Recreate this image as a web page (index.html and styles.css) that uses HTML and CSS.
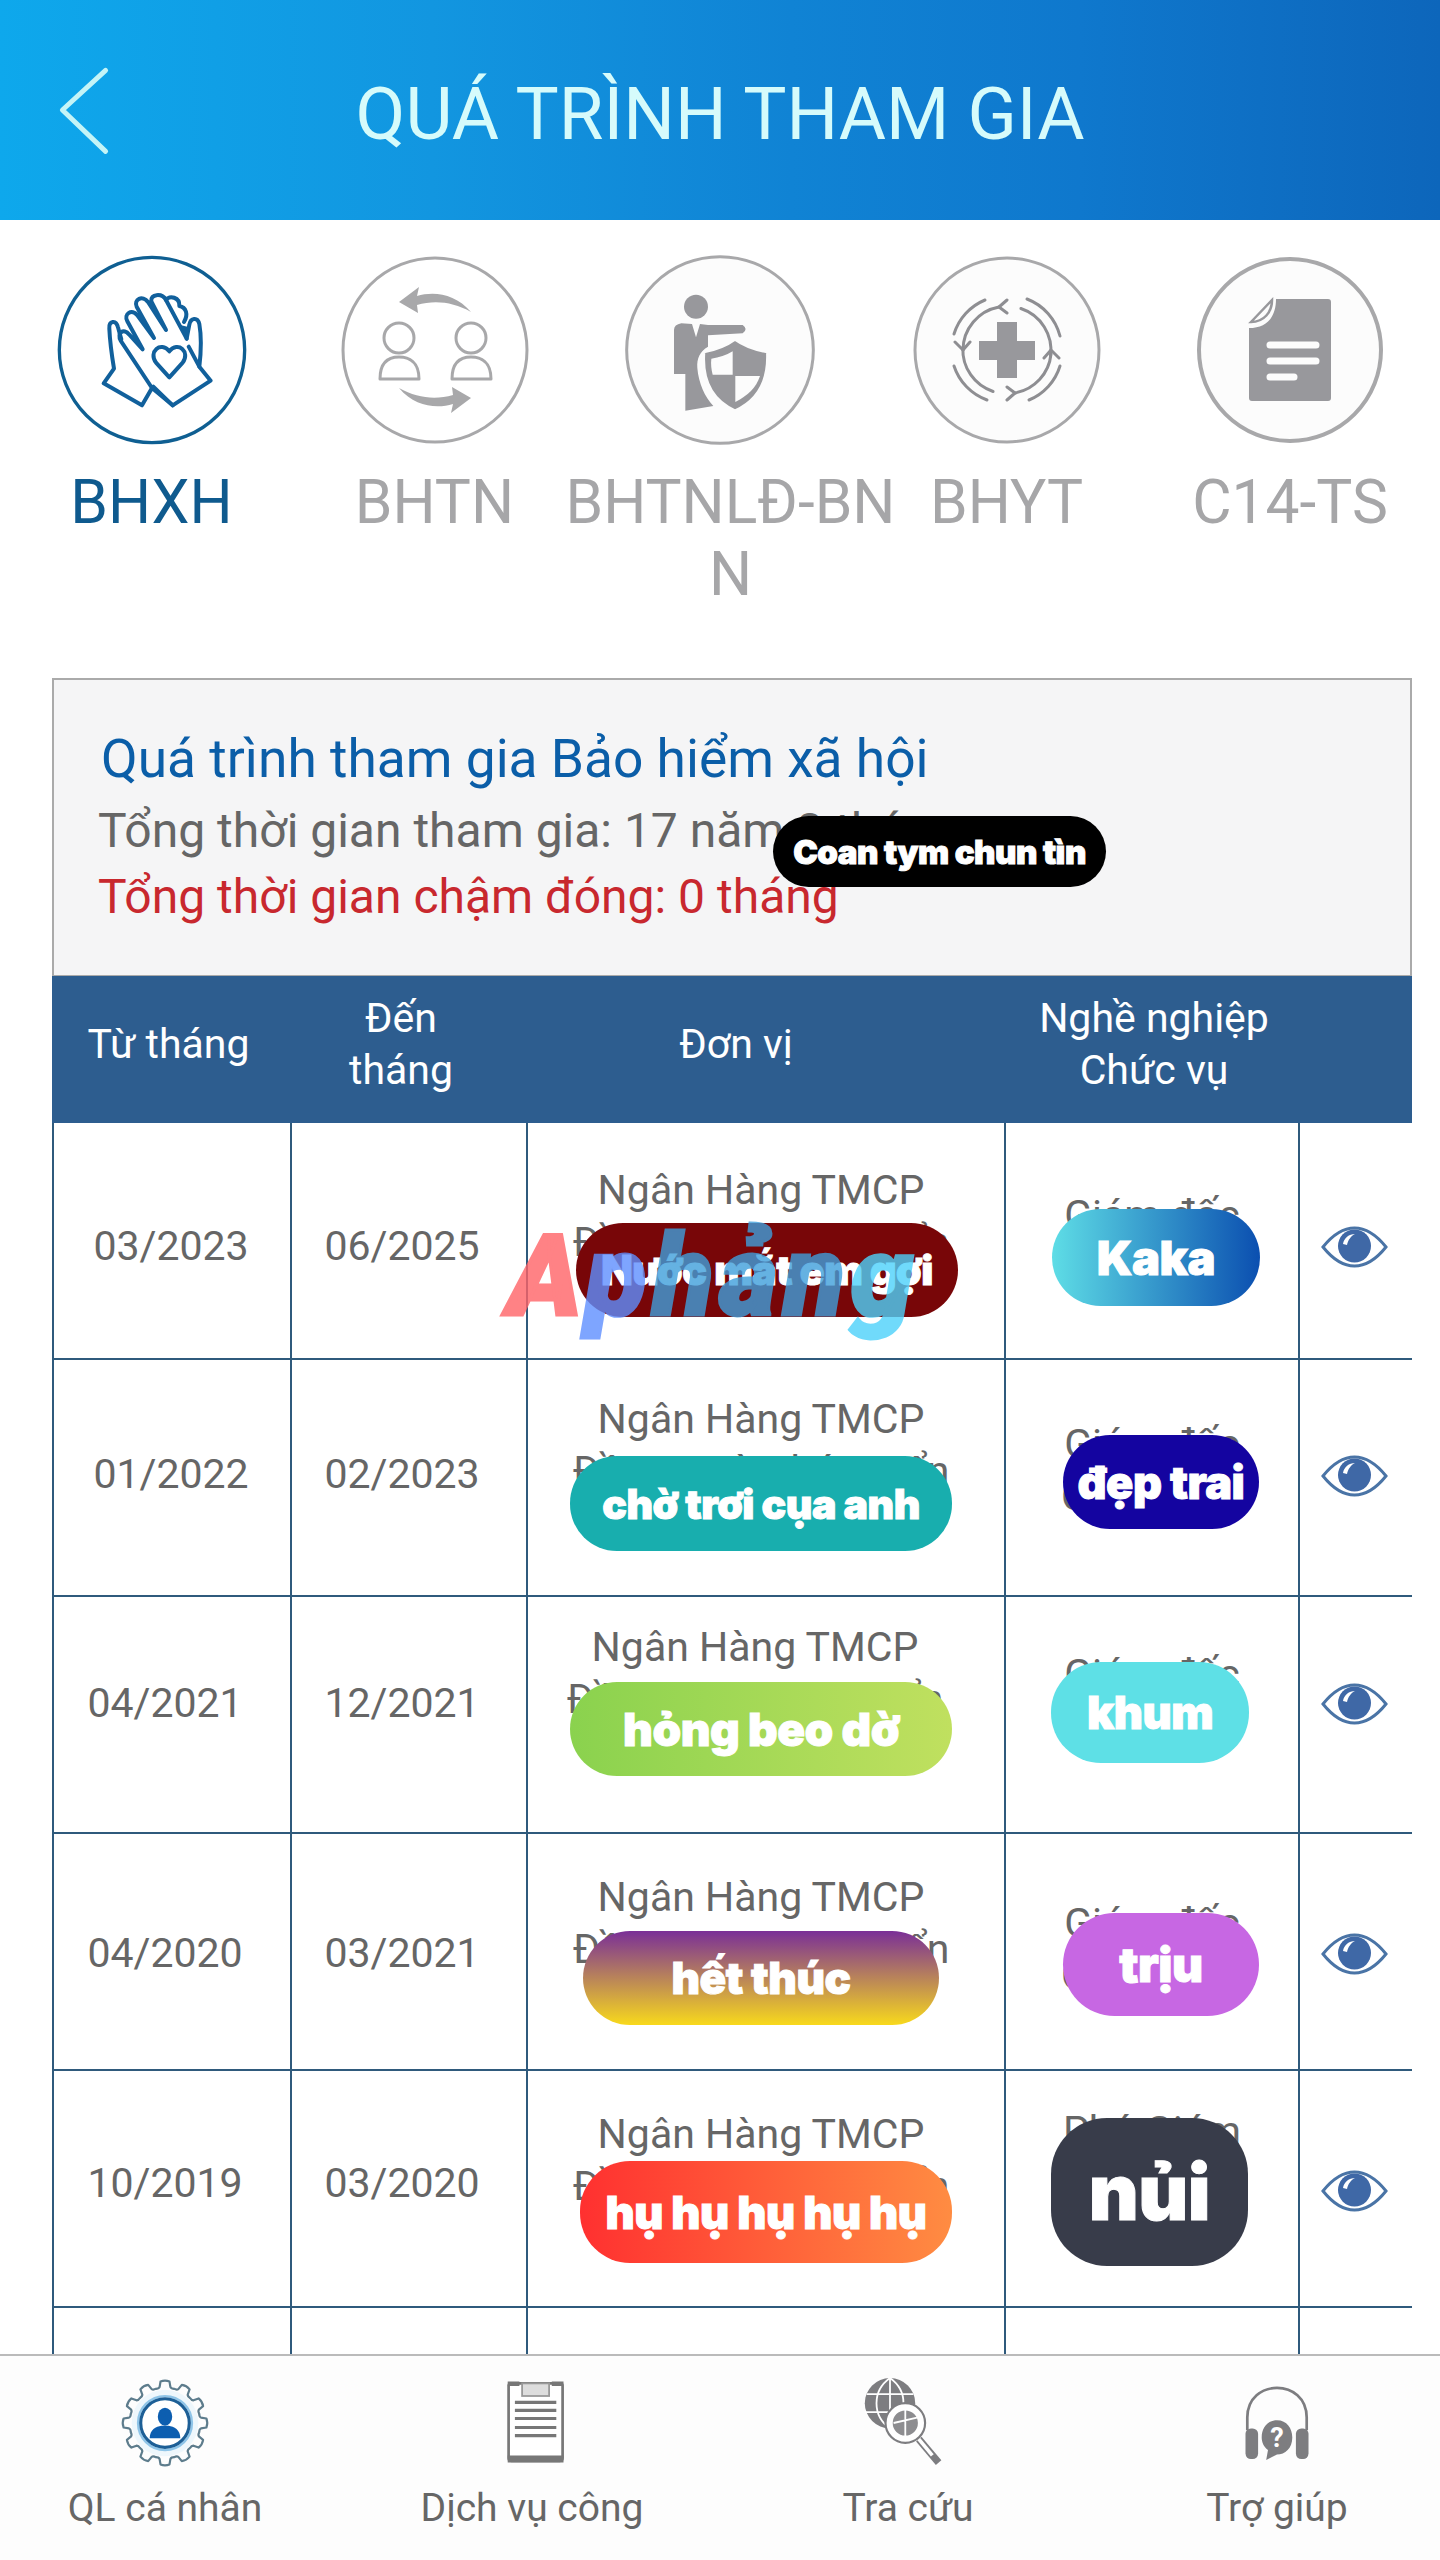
FILE: index.html
```html
<!DOCTYPE html>
<html lang="vi">

<head>
    <meta charset="UTF-8">
    <meta name="viewport" content="width=device-width, initial-scale=1.0">
    <title>Quá trình tham gia</title>
    <link rel="stylesheet" href="styles.css">
</head>

<body>
    <div class="app">

        <header class="top-bar">
            <svg class="back-icon" viewBox="0 0 60 100">
                <path d="M54 6 L6 50 L54 96" />
            </svg>
            <h1 class="page-title">QUÁ TRÌNH THAM GIA</h1>
        </header>

        <nav class="tabs">
            <div class="tab active">
                <svg class="tab-icon" viewBox="0 0 600 600">
                    <circle cx="300" cy="300" r="278" fill="#fff" stroke="#0f5f92" stroke-width="10" />
                    <g fill="none" stroke="#11609c" stroke-width="12" stroke-linejoin="round" stroke-linecap="round">
                        <path d="M208 268 L198 232 C192 208 170 212 172 236 C174 280 180 320 186 356 L155 400 L270 466 L300 414 L362 466 L476 392 L442 350 C448 300 448 256 442 222 C436 200 416 204 412 224 L404 266" />
                        <path d="M300 414 L206 272 C194 250 214 232 232 254 L272 298 L226 214 C214 192 240 174 256 196 L306 264 L254 170 C244 148 272 134 288 156 L342 240 L298 154 C294 132 330 128 342 150 L404 266" />
                        <path d="M342 150 C352 134 384 142 382 168 C402 172 410 192 396 216" />
                        <path d="M352 382 L312 338 C288 306 326 272 352 304 C378 272 416 306 392 338 Z" />
                        <path d="M362 466 L304 410 M442 350 L410 290" />
                    </g>
                    <path d="M385 225 L412 232 L404 266 Z" fill="#11609c" />
                </svg>
                <span class="tab-label">BHXH</span>
            </div>
            <div class="tab">
                <svg class="tab-icon" viewBox="0 0 200 200">
                    <circle cx="100" cy="100" r="92" fill="#fff" stroke="#a8a8aa" stroke-width="3" />
                    <g fill="none" stroke="#a8a8aa" stroke-width="3" stroke-linejoin="round">
                        <circle cx="64" cy="88" r="15" />
                        <circle cx="136" cy="88" r="15" />
                        <path d="M45 129 C45 112 54 107 64 107 C74 107 84 112 84 129 Z" />
                        <path d="M117 129 C117 112 126 107 136 107 C146 107 156 112 156 129 Z" />
                    </g>
                    <path d="M136 62 C120 43 98 41 82 46 L84 37 L64 52 L83 63 L82 55 C100 50 118 52 136 62 Z" fill="#a8a8aa" />
                    <path d="M64 138 C80 157 102 159 118 154 L116 163 L136 148 L117 137 L118 145 C100 150 82 148 64 138 Z" fill="#a8a8aa" />
                </svg>
                <span class="tab-label">BHTN</span>
            </div>
            <div class="tab">
                <svg class="tab-icon" viewBox="0 0 600 600">
                    <circle cx="300" cy="300" r="280" fill="#fcfcfc" stroke="#a8a8aa" stroke-width="9" />
                    <circle cx="228" cy="170" r="36" fill="#98989c" />
                    <path d="M162 240 Q162 224 184 220 L216 222 L228 262 L240 222 L264 225 L368 225 Q386 238 368 250 L264 256 L264 290 C240 304 230 324 232 354 C236 400 254 440 280 468 L196 482 L196 372 L162 372 Z" fill="#98989c" />
                    <path d="M345 268 C375 290 410 300 442 306 C446 384 420 448 345 482 C270 448 246 384 252 306 C282 300 315 290 345 268 Z" fill="#98989c" stroke="#fcfcfc" stroke-width="8" />
                    <path d="M338 304 L338 374 L278 374 C274 358 272 342 274 326 C298 322 318 316 338 304 Z" fill="#fcfcfc" />
                    <path d="M346 378 L420 378 C408 414 384 436 346 456 Z" fill="#fcfcfc" />
                </svg>
                <span class="tab-label tab-label-wide">BHTNLĐ-BN<wbr>N</span>
            </div>
            <div class="tab">
                <svg class="tab-icon" viewBox="0 0 200 200">
                    <circle cx="100" cy="100" r="92" fill="#fcfcfc" stroke="#a8a8aa" stroke-width="3" />
                    <path d="M90 72 H110 V91 H128 V110 H110 V128 H90 V110 H72 V91 H90 Z" fill="#98989c" />
                    <g fill="none" stroke="#8e8e92" stroke-width="3" stroke-linecap="round" stroke-linejoin="round">
                        <path d="M56 100 A44 44 0 0 1 92 57" />
                        <path d="M108 57 A44 44 0 0 1 144 100" transform="rotate(8 100 100)" />
                        <path d="M144 104 A44 44 0 0 1 108 143" />
                        <path d="M92 143 A44 44 0 0 1 56 104" transform="rotate(8 100 100)" />
                        <path d="M47 84 A54 54 0 0 1 78 50" />
                        <path d="M120 49 A54 54 0 0 1 153 86" />
                        <path d="M153 116 A54 54 0 0 1 122 150" />
                        <path d="M80 150 A54 54 0 0 1 47 116" />
                        <path d="M100 50 L92 57 L100 63 M48 92 L56 100 L63 92 M100 150 L108 143 L100 137 M152 108 L144 100 L137 108" />
                    </g>
                </svg>
                <span class="tab-label">BHYT</span>
            </div>
            <div class="tab">
                <svg class="tab-icon" viewBox="0 0 200 200">
                    <circle cx="100" cy="100" r="91" fill="#fcfcfc" stroke="#a8a8aa" stroke-width="4" />
                    <path d="M86 49 H138 Q141 49 141 52 V148 Q141 151 138 151 H62 Q59 151 59 148 V78 C76 78 86 68 86 49 Z" fill="#98989c" />
                    <path d="M61 72 L82 50 C82 62 74 72 61 72 Z" fill="none" stroke="#98989c" stroke-width="2.5" />
                    <path d="M80 95 H126 M80 111 H126 M80 127 H104" fill="none" stroke="#fcfcfc" stroke-width="7" stroke-linecap="round" />
                </svg>
                <span class="tab-label">C14-TS</span>
            </div>
        </nav>

        <main class="content">
            <section class="summary">
                <h2 class="summary-title">Quá trình tham gia Bảo hiểm xã hội</h2>
                <p class="summary-line">Tổng thời gian tham gia: 17 năm 8 tháng</p>
                <p class="summary-line late">Tổng thời gian chậm đóng: 0 tháng</p>
                <span class="sticker sticker-black">Coan tym chun tìn</span>
            </section>

            <div class="table-head">
                <div>Từ tháng</div>
                <div>Đến<br>tháng</div>
                <div>Đơn vị</div>
                <div>Nghề nghiệp<br>Chức vụ</div>
            </div>

            <div class="table-body">
                <div class="row r1">
                    <div class="cell date">03/2023</div>
                    <div class="cell date">06/2025</div>
                    <div class="cell unit">Ngân Hàng TMCP<br>Đầu Tư và Phát Triển<br>Việt Nam</div>
                    <div class="cell job">Giám đốc<br>Chi nhánh</div>
                    <div class="cell view"><svg class="eye"><use href="#eye-icon" /></svg></div>
                    <span class="sticker s-tears">Nước mắt em gợi</span>
                    <span class="sticker s-kaka">Kaka</span>
                </div>
                <div class="row r2">
                    <div class="cell date">01/2022</div>
                    <div class="cell date">02/2023</div>
                    <div class="cell unit">Ngân Hàng TMCP<br>Đầu Tư và Phát Triển<br>Việt Nam</div>
                    <div class="cell job">Giám đốc<br>Chi nhánh</div>
                    <div class="cell view"><svg class="eye"><use href="#eye-icon" /></svg></div>
                    <span class="sticker s-wait">chờ trơi cụa anh</span>
                    <span class="sticker s-handsome">đẹp trai</span>
                </div>
                <div class="row r3">
                    <div class="cell date shifted">04/2021</div>
                    <div class="cell date">12/2021</div>
                    <div class="cell unit">Ngân Hàng TMCP<br>Đầu Tư và Phát Triển<br>Việt Nam</div>
                    <div class="cell job">Giám đốc<br>Chi nhánh</div>
                    <div class="cell view"><svg class="eye"><use href="#eye-icon" /></svg></div>
                    <span class="sticker s-beo">hỏng beo dờ</span>
                    <span class="sticker s-khum">khum</span>
                </div>
                <div class="row r4">
                    <div class="cell date shifted">04/2020</div>
                    <div class="cell date">03/2021</div>
                    <div class="cell unit">Ngân Hàng TMCP<br>Đầu Tư và Phát Triển<br>Việt Nam</div>
                    <div class="cell job">Giám đốc<br>Chi nhánh</div>
                    <div class="cell view"><svg class="eye"><use href="#eye-icon" /></svg></div>
                    <span class="sticker s-end">hết thúc</span>
                    <span class="sticker s-triu">trịu</span>
                </div>
                <div class="row r5">
                    <div class="cell date shifted">10/2019</div>
                    <div class="cell date">03/2020</div>
                    <div class="cell unit">Ngân Hàng TMCP<br>Đầu Tư và Phát Triển<br>Việt Nam</div>
                    <div class="cell job">Phó Giám<br>đốc</div>
                    <div class="cell view"><svg class="eye"><use href="#eye-icon" /></svg></div>
                    <span class="sticker s-cry">hụ hụ hụ hụ hụ</span>
                    <span class="sticker s-nui">nủi</span>
                </div>
                <div class="row">
                    <div class="cell"></div>
                    <div class="cell"></div>
                    <div class="cell"></div>
                    <div class="cell"></div>
                    <div class="cell"></div>
                </div>
            </div>
        </main>

        <footer class="bottom-nav">
            <div class="nav-item">
                <svg class="nav-icon" viewBox="0 0 100 100">
                    <circle cx="50" cy="50" r="37" fill="#eef7fc" />
                    <g transform="translate(50 50)" fill="none" stroke="#5d7c8c" stroke-width="2.4" stroke-linejoin="round">
                        <path id="gear-tooth" d="M-10.5-38 Q-7-38-6-40 L-5-46 Q0-48 5-46 L6-40 Q7-38 10.5-38" />
                        <use href="#gear-tooth" transform="rotate(30)" />
                        <use href="#gear-tooth" transform="rotate(60)" />
                        <use href="#gear-tooth" transform="rotate(90)" />
                        <use href="#gear-tooth" transform="rotate(120)" />
                        <use href="#gear-tooth" transform="rotate(150)" />
                        <use href="#gear-tooth" transform="rotate(180)" />
                        <use href="#gear-tooth" transform="rotate(210)" />
                        <use href="#gear-tooth" transform="rotate(240)" />
                        <use href="#gear-tooth" transform="rotate(270)" />
                        <use href="#gear-tooth" transform="rotate(300)" />
                        <use href="#gear-tooth" transform="rotate(330)" />
                    </g>
                    <circle cx="50" cy="50" r="30" fill="#fff" stroke="#8fc5e8" stroke-width="2.5" />
                    <circle cx="50" cy="50" r="27" fill="#fff" stroke="#1d5f96" stroke-width="3.5" />
                    <ellipse cx="50" cy="43" rx="8" ry="10" fill="#0d5eb0" />
                    <path d="M33 67 C33 57 40 54 46 53 H54 C60 54 67 57 67 67 Z" fill="#0d5eb0" />
                </svg>
                <span class="nav-label">QL cá nhân</span>
            </div>
            <div class="nav-item">
                <svg class="nav-icon" viewBox="0 0 100 100">
                    <g transform="translate(5 0)">
                        <rect x="19" y="6" width="60" height="86" rx="3" fill="#fff" stroke="#777" stroke-width="3" />
                        <path d="M18 4 H31 V9 H18 Z M67 4 H80 V9 H67 Z M18 86 H80 V94 H18 Z" fill="#777" />
                        <rect x="34" y="6" width="30" height="14" fill="#ddd" stroke="#999" stroke-width="2" />
                        <path d="M26 27 H72 M26 36 H72 M26 45 H72 M26 55 H72 M26 64 H72" stroke="#777" stroke-width="3.6" />
                    </g>
                </svg>
                <span class="nav-label">Dịch vụ công</span>
            </div>
            <div class="nav-item">
                <svg class="nav-icon" viewBox="0 0 100 100">
                    <g transform="translate(-6 0)">
                        <circle cx="36" cy="28" r="28" fill="#7d7d80" />
                        <path d="M36 0 V56 M10 18 H62 M8 38 H64 M36 0 C16 14 16 42 36 56 M36 0 C56 14 56 42 36 56" fill="none" stroke="#fff" stroke-width="2" />
                        <circle cx="53" cy="50" r="22" fill="#fff" stroke="#7d7d80" stroke-width="2.4" />
                        <circle cx="53" cy="50" r="15" fill="#8d8d90" stroke="#fff" stroke-width="2" />
                        <path d="M53 35 V65 M40 50 L66 44" stroke="#fff" stroke-width="2" />
                        <path d="M68 68 L90 94" stroke="#7d7d80" stroke-width="8" />
                        <path d="M68 68 L83 86" stroke="#fff" stroke-width="4" />
                    </g>
                </svg>
                <span class="nav-label">Tra cứu</span>
            </div>
            <div class="nav-item nav-help">
                <svg class="nav-icon" viewBox="0 0 100 100">
                    <path d="M17 58 V44 C17 0 83 0 83 44 V58" fill="none" stroke="#7d7d80" stroke-width="3" />
                    <rect x="15" y="56" width="14" height="34" rx="6" fill="#7d7d80" />
                    <rect x="71" y="56" width="14" height="34" rx="6" fill="#7d7d80" />
                    <path d="M50 47 C61 47 67 56 67 66 C67 78 59 85 50 85 L38 91 L40 80 C35 76 33 71 33 66 C33 56 39 47 50 47 Z" fill="#7d7d80" />
                    <text class="help-mark" x="50" y="77">?</text>
                </svg>
                <span class="nav-label">Trợ giúp</span>
            </div>
        </footer>

        <span class="watermark"><span class="wm-a">A</span><span class="wm-p">p</span><span class="wm-mid">hản</span><span class="wm-g">g</span></span>
    </div>

    <svg class="icon-defs">
        <symbol id="eye-icon" viewBox="0 0 67 42">
            <path d="M2 21 C14 6 24 2 33.5 2 C43 2 53 6 65 21 C53 36 43 40 33.5 40 C24 40 14 36 2 21 Z" fill="#fff" stroke="#4a74a6" stroke-width="3" />
            <circle cx="33.5" cy="20" r="16.5" fill="#3f68a6" />
            <path d="M22 18 C23 12 28 8 34 8 C30 10 27 14 26 19 Z" fill="#fff" />
        </symbol>
    </svg>
</body>

</html>
```

FILE: styles.css
```css
* {
    box-sizing: border-box;
}

body {
    margin: 0;
    font-family: Roboto, "Noto Sans", sans-serif;
    color: #666;
}

.app {
    position: relative;
    display: flex;
    flex-direction: column;
    height: 2560px;
    overflow: hidden;
    background: #fff;
}

.icon-defs {
    position: absolute;
    width: 0;
    height: 0;
}

/* header */
.top-bar {
    display: grid;
    grid-template-columns: 1fr auto 1fr;
    align-items: center;
    height: 220px;
    padding-left: 57px;
    padding-right: 57px;
    background: linear-gradient(90deg, #0ea8ec 0%, #1296e0 30%, #1083d4 55%, #0f78cd 75%, #0d66bb 100%);
}

.back-icon {
    width: 54px;
    height: 96px;
    fill: none;
    stroke: #c4f4f7;
    stroke-width: 5.5;
    stroke-linecap: round;
    stroke-linejoin: round;
}

.page-title {
    margin: 0;
    padding-top: 10px;
    font-size: 72.5px;
    font-weight: 400;
    line-height: 80px;
    color: #d6fbfb;
    white-space: nowrap;
}

/* tabs */
.tabs {
    display: grid;
    grid-template-columns: 283px 283px 287px 287px 280px;
    padding: 30px 0 67px 10px;
}

.tab {
    display: flex;
    flex-direction: column;
    align-items: center;
    min-width: 0;
}

.tab-icon {
    width: 200px;
    height: 200px;
}

.tab-label {
    margin-top: 17px;
    font-size: 60.5px;
    line-height: 72px;
    color: #a6a6a8;
    text-align: center;
    white-space: nowrap;
}

.tab.active .tab-label {
    color: #0f5a8e;
}

.tab-label-wide {
    flex: none;
    width: 350px;
    margin-left: 22px;
    white-space: normal;
}

/* content */
.content {
    flex: 1;
    min-height: 0;
    margin-left: 52px;
    margin-right: 28px;
    overflow: hidden;
}

.summary {
    position: relative;
    height: 298px;
    padding: 46px 44px 0;
    background: #f5f5f6;
    border: 2px solid #aaa;
    border-bottom-width: 1px;
}

.summary-title {
    margin: 0 0 6px 3px;
    font-size: 53.3px;
    font-weight: 400;
    line-height: 66px;
    color: #0b5ea8;
    white-space: nowrap;
}

.summary-line {
    margin: 0;
    font-size: 48px;
    line-height: 66px;
    color: #666;
    white-space: nowrap;
}

.summary-line.late {
    color: #c8282e;
}

.table-head {
    display: grid;
    grid-template-columns: 233px 232px 438px 398px 59px;
    align-items: center;
    height: 147px;
    padding-bottom: 12px;
    font-size: 41px;
    line-height: 52px;
    color: #fff;
    text-align: center;
    background: #2d5d8f;
}

.table-body {
    border-left: 2px solid #2f5a7c;
}

.row {
    position: relative;
    display: grid;
    grid-template-columns: 238px 236px 478px 294px 112px;
    height: 237px;
    border-bottom: 2px solid #2f5a7c;
}

.cell {
    font-size: 41px;
    line-height: 52px;
    text-align: center;
    white-space: nowrap;
    border-right: 2px solid #2f5a7c;
}

.cell:last-of-type {
    border-right: 0;
}

.date {
    padding-top: var(--date-top);
    padding-right: 14px;
}

.date:first-child {
    padding-right: 2px;
}

.date.shifted {
    padding-right: 14px;
}

.unit {
    padding-top: var(--unit-top);
    padding-right: 10px;
}

.job {
    padding-top: var(--job-top);
}

.view {
    padding-top: var(--eye-top);
    padding-right: 3px;
}

.eye {
    display: block;
    width: 67px;
    height: 42px;
    margin: 0 auto;
}

.r1 {
    --date-top: 97px;
    --unit-top: 41px;
    --job-top: 66px;
    --eye-top: 103px;
}

.r2 {
    --date-top: 88px;
    --unit-top: 33px;
    --job-top: 58px;
    --eye-top: 95px;
}

.r3 {
    --date-top: 80px;
    --unit-top: 24px;
    --job-top: 51px;
    --eye-top: 86px;
}

.r3 .unit {
    padding-right: 22px;
}

.r4 {
    --date-top: 93px;
    --unit-top: 37px;
    --job-top: 63px;
    --eye-top: 99px;
}

.r5 {
    --date-top: 86px;
    --unit-top: 37px;
    --job-top: 34px;
    --eye-top: 99px;
}

/* stickers lying over the table */
.sticker {
    position: absolute;
    display: flex;
    align-items: center;
    justify-content: center;
    height: 94px;
    font-family: Inter, Roboto, sans-serif;
    font-size: 41px;
    font-weight: 900;
    letter-spacing: -0.5px;
    color: #fff;
    white-space: nowrap;
    border-radius: 47px;
    -webkit-text-stroke: 1px #fff;
}

.sticker-black {
    left: 719px;
    top: 136px;
    width: 333px;
    height: 71px;
    font-size: 33px;
    background: #000;
    border-radius: 36px;
}

.s-tears {
    left: 522px;
    top: 100px;
    width: 382px;
    background: #780608;
}

.s-kaka {
    left: 998px;
    top: 86px;
    width: 208px;
    height: 97px;
    font-size: 47px;
    background: linear-gradient(90deg, #5edde6, #0b4fb0);
    border-radius: 49px;
}

.s-wait {
    left: 516px;
    top: 96px;
    width: 382px;
    height: 95px;
    background: #18aeae;
}

.s-handsome {
    left: 1009px;
    top: 75px;
    width: 196px;
    font-size: 45px;
    background: #1404a0;
}

.s-beo {
    left: 516px;
    top: 85px;
    width: 382px;
    font-size: 46px;
    background: linear-gradient(90deg, #8ad24e, #c0e05f);
}

.s-khum {
    left: 997px;
    top: 65px;
    width: 198px;
    height: 101px;
    font-size: 45px;
    background: #5ee0e6;
    border-radius: 50px;
}

.s-end {
    left: 529px;
    top: 97px;
    width: 356px;
    font-size: 44px;
    background: linear-gradient(180deg, #7a2f97, #f8d91c);
}

.s-triu {
    left: 1009px;
    top: 79px;
    width: 196px;
    height: 103px;
    font-size: 48px;
    background: #c767e3;
    border-radius: 52px;
}

.s-cry {
    left: 526px;
    top: 90px;
    width: 372px;
    height: 102px;
    font-size: 45px;
    background: linear-gradient(90deg, #ff3030, #ff8c42);
    border-radius: 50px;
}

.s-nui {
    left: 997px;
    top: 47px;
    width: 197px;
    height: 148px;
    font-size: 77px;
    background: #383c4a;
    border-radius: 56px;
}

.watermark {
    position: absolute;
    left: 508px;
    top: 1212px;
    font-family: Roboto, sans-serif;
    font-size: 112px;
    font-style: italic;
    font-weight: 900;
    line-height: 130px;
    letter-spacing: 6px;
    opacity: 0.8;
    white-space: nowrap;
}

.wm-a {
    color: #ff6367;
    -webkit-text-stroke: 3px #ff6367;
}

.wm-p {
    color: #5f8fff;
    -webkit-text-stroke: 3px #5f8fff;
}

.wm-mid {
    color: #3f9fdc;
    -webkit-text-stroke: 3px #3f9fdc;
}

.wm-g {
    color: #4dd2fb;
    -webkit-text-stroke: 3px #4dd2fb;
}

/* bottom nav */
.bottom-nav {
    display: grid;
    grid-template-columns: 330px 404px 348px 358px;
    height: 206px;
    padding-top: 22px;
    background: #fdfdfd;
    border-top: 2px solid #bbb;
}

.nav-item {
    display: flex;
    flex-direction: column;
    align-items: center;
}

.nav-help {
    padding-left: 32px;
}

.nav-icon {
    width: 90px;
    height: 90px;
}

.nav-label {
    margin-top: 14px;
    font-size: 39px;
    line-height: 52px;
    color: #666;
    white-space: nowrap;
}

.help-mark {
    font-family: Roboto, sans-serif;
    font-size: 30px;
    font-weight: 700;
    text-anchor: middle;
    fill: #fff;
}
```
